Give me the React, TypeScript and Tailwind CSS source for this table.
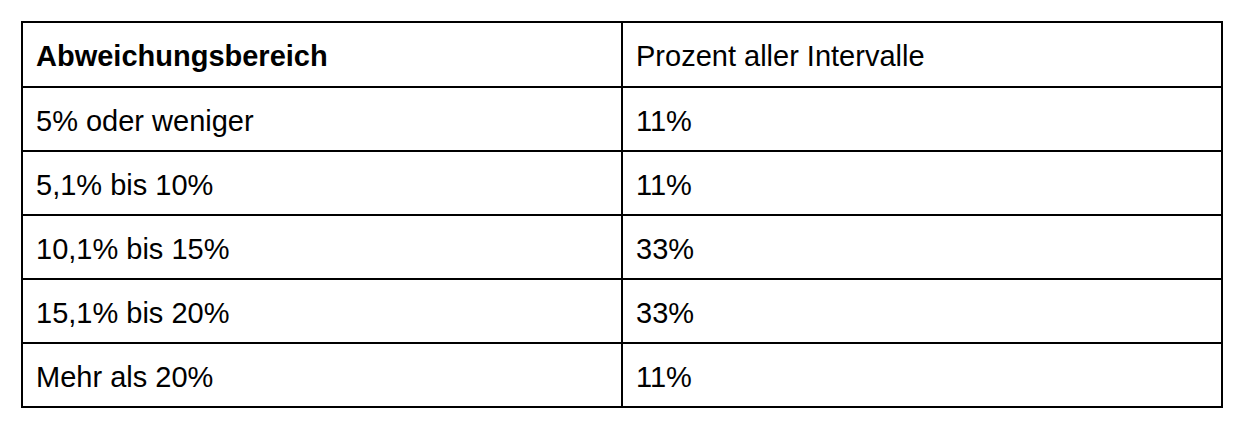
const rows = [
  ["5% oder weniger", "11%"],
  ["5,1% bis 10%", "11%"],
  ["10,1% bis 15%", "33%"],
  ["15,1% bis 20%", "33%"],
  ["Mehr als 20%", "11%"],
];

export default function App() {
  return (
    <div className="w-[1242px] h-[432px] bg-white pt-[21px] pl-[21px] font-['Liberation_Sans',Arial,sans-serif] text-[29px] text-black">
      <table className="w-[1202px] table-fixed border-collapse">
        <colgroup>
          <col className="w-[600px]" />
          <col />
        </colgroup>
        <tbody>
          <tr className="h-[65px]">
            <td className="border-2 border-black pl-[13px] pt-[5px] font-bold">Abweichungsbereich</td>
            <td className="border-2 border-black pl-[13px] pt-[5px]">Prozent aller Intervalle</td>
          </tr>
          {rows.map(([range, pct]) => (
            <tr key={range} className="h-[64px]">
              <td className="border-2 border-black pl-[13px] pt-[5px]">{range}</td>
              <td className="border-2 border-black pl-[13px] pt-[5px]">{pct}</td>
            </tr>
          ))}
        </tbody>
      </table>
    </div>
  );
}
